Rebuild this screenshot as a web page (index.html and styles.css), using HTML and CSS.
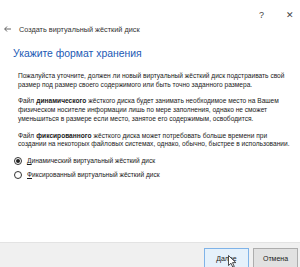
FILE: index.html
```html
<!DOCTYPE html>
<html lang="ru">
<head>
    <meta charset="UTF-8">
    <title>Создать виртуальный жёсткий диск</title>
    <link rel="stylesheet" href="styles.css">
</head>
<body>
    <div class="window">
        <div class="titlebar">
            <span class="tb-btn">?</span>
            <span class="tb-btn close">✕</span>
        </div>

        <div class="nav">
            <svg class="back" width="7" height="6" viewBox="0 0 7 6">
                <path d="M3 0.5 L0.7 3 L3 5.5 M0.7 3 H7" fill="none" stroke="#555" stroke-width="0.9"/>
            </svg>
            <span class="nav-title">Создать виртуальный жёсткий диск</span>
        </div>

        <div class="content">
            <h1 class="heading">Укажите формат хранения</h1>

            <div class="body">
                <p>Пожалуйста уточните, должен ли новый виртуальный жёсткий диск подстраивать свой размер под размер своего содержимого или быть точно заданного размера.</p>
                <p>Файл <b>динамического</b> жёсткого диска будет занимать необходимое место на Вашем физическом носителе информации лишь по мере заполнения, однако не сможет уменьшиться в размере если место, занятое его содержимым, освободится.</p>
                <p>Файл <b>фиксированного</b> жёсткого диска может потребовать больше времени при создании на некоторых файловых системах, однако, обычно, быстрее в использовании.</p>

                <div class="options">
                    <label class="option">
                        <span class="radio checked"></span>
                        <span><u>Д</u>инамический виртуальный жёсткий диск</span>
                    </label>
                    <label class="option">
                        <span class="radio"></span>
                        <span><u>Ф</u>иксированный виртуальный жёсткий диск</span>
                    </label>
                </div>
            </div>
        </div>

        <div class="footer">
            <button class="btn primary">Далее</button>
            <button class="btn">Отмена</button>
            <svg class="cursor" width="9" height="13" viewBox="0 0 9 13">
                <path d="M0.5 0.5 L0.5 10.5 L3 8.2 L4.8 12.2 L6.3 11.5 L4.5 7.6 L7.8 7.6 Z" fill="#fff" stroke="#222" stroke-width="0.8"/>
            </svg>
        </div>
    </div>
</body>
</html>
```

FILE: styles.css
```css
* {
    margin: 0;
    padding: 0;
    box-sizing: border-box;
}

body {
    font-family: "Liberation Sans", Arial, sans-serif;
    background: #fff;
    color: #222;
    width: 300px;
    height: 267px;
    overflow: hidden;
}

.window {
    height: 267px;
    display: flex;
    flex-direction: column;
}

.titlebar {
    height: 22px;
    display: flex;
    justify-content: flex-end;
    align-items: center;
    padding-top: 8px;
    padding-right: 6px;
    gap: 22px;
    font-size: 9px;
    color: #444;
}

.nav {
    display: flex;
    align-items: center;
    gap: 8px;
    padding-left: 4px;
    margin-top: 2px;
    height: 10px;
}

.nav-title {
    font-size: 7.3px;
    color: #333;
}

.content {
    flex: 1;
    padding-left: 13px;
    padding-right: 6px;
}

.heading {
    font-size: 10.4px;
    font-weight: normal;
    color: #2259b4;
    margin-top: 14px;
    margin-bottom: 13px;
}

.body {
    padding-left: 5px;
    font-size: 6.6px;
    line-height: 8.7px;
    color: #1a1a1a;
}

.body p {
    margin-bottom: 8px;
}

.body b {
    margin: 0 0.3px;
}

.options {
    display: flex;
    flex-direction: column;
    gap: 5px;
    margin-top: 7px;
}

.option {
    display: flex;
    align-items: center;
    gap: 5px;
    margin-left: -4px;
}

.radio {
    width: 8px;
    height: 8px;
    border: 1px solid #333;
    border-radius: 50%;
    display: flex;
    align-items: center;
    justify-content: center;
}

.radio.checked::after {
    content: "";
    width: 4px;
    height: 4px;
    border-radius: 50%;
    background: #222;
}

.footer {
    position: relative;
    height: 25px;
    background: #f0f0f0;
    border-top: 1px solid #e3e3e3;
    display: flex;
    justify-content: flex-end;
    align-items: flex-start;
    gap: 4px;
    padding-top: 5px;
    padding-right: 2px;
}

.btn {
    width: 45px;
    height: 21px;
    font-family: "Liberation Sans", Arial, sans-serif;
    font-size: 7px;
    color: #222;
    background: #e1e1e1;
    border: 1px solid #adadad;
}

.btn.primary {
    background: #e5f1fb;
    border-color: #7fb3e8;
}

.cursor {
    position: absolute;
    left: 228px;
    top: 12px;
}
```
